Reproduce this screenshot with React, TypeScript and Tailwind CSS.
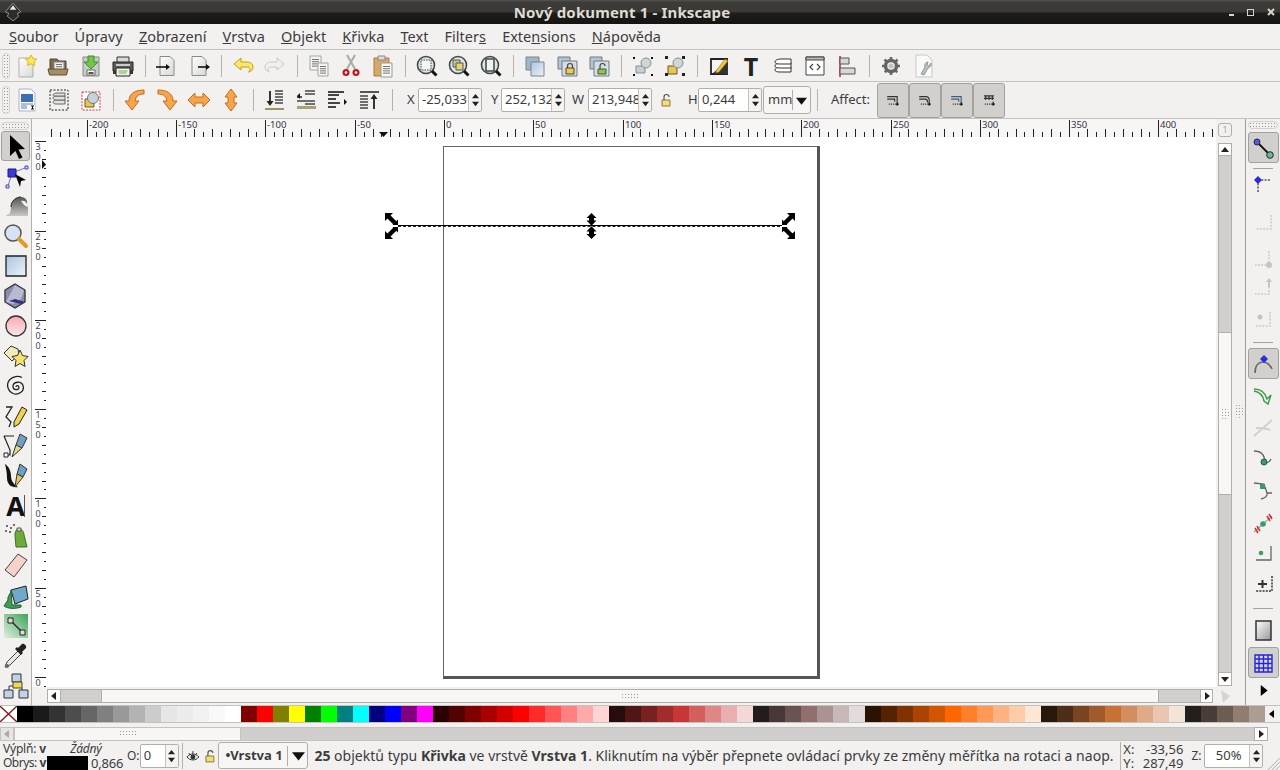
import React from "react";

const Pg = ({ fill = "url(#paper)" }: { fill?: string }) => (
  <path d="M5 2.5h10l4 4v15H5z" fill={fill} stroke="#8a8a85" strokeWidth="1" />
);
const Lines = ({ x, y, n = 3, w = 7 }: { x: number; y: number; n?: number; w?: number }) => (
  <g stroke="#77776f" strokeWidth="1">
    {Array.from({ length: n }).map((_, i) => (
      <path key={i} d={`M${x} ${y + i * 2.2 + 0.5}h${w}`} />
    ))}
  </g>
);
const Glass = ({ children }: { children?: React.ReactNode }) => (
  <>
    <circle cx="11" cy="11" r="8.5" fill="#dfe5e5" stroke="#3f4a4a" strokeWidth="1.6" />
    {children}
    <path d="M17 17l4.5 4.5" stroke="#111" strokeWidth="3" />
  </>
);
const Arrow = ({ d }: { d: string }) => <path d={d} fill="#f6a64a" stroke="#c8691a" strokeWidth="1" strokeLinejoin="round" />;
const Affect = ({ kind }: { kind: number }) => (
  <g fill="none" stroke={kind === 2 ? "#3f5f80" : "#333"} strokeWidth="1.4">
    {kind === 1 ? <path d="M5 8h8a4 4 0 0 1 4 4v2M5 11h7a3 3 0 0 1 3 3v1" /> : kind === 3 ? <path d="M6 7h12M6 10h12M8 7v5M12 7v5M16 7v5" /> : <path d="M5 8h12v6M5 11h9v3" />}
    <path d="M7 17h8" strokeDasharray="1.5 1" stroke="#444" />
    <path d="M17 14v5M15 17h4" stroke="#111" />
  </g>
);

const icons: Record<string, React.ReactNode> = {
  new: (<><path d="M4 4h14v19H4z" fill="url(#paper)" stroke="#b0b0a8" /><path d="M16 1l2 3.4 3.7.7-2.6 2.7.5 3.7-3.6-1.7-3.4 1.7.5-3.7L10.500 5l3.700-.7z" fill="#fce94f" stroke="#d8b62c" /></>),
  open: (<><path d="M3 5h7l2 2h7v13H3z" fill="#7d6a4d" stroke="#54452f" /><path d="M7 8h10v8H7z" fill="#eee" stroke="#888" /><Lines x={9} y={10} n={2} w={6} /><path d="M1 15h20l-1.500 6H2.500z" fill="#a58d64" stroke="#5f4f36" /></>),
  save: (<><path d="M4 3h16v19H4z" fill="#c7ccc8" stroke="#888c88" /><path d="M8 16h8v5H8z" fill="#fff" stroke="#666" /><path d="M9.500 18h5v2h-5z" fill="#555" /><path d="M9 2h6v6h4l-7 7-7-7h4z" fill="#73c34d" stroke="#3f8f28" /></>),
  print: (<><path d="M6 3h12v6H6z" fill="#d8d8d8" stroke="#333" /><path d="M2 8h20v9H2z" fill="#5b5d5b" stroke="#222" /><path d="M5 10h14v2H5z" fill="#ccc" /><path d="M5 14h14v8H5z" fill="#f1f1e6" stroke="#222" /><path d="M7 16h10l-2 4H8z" fill="#a9d69a" /><path d="M2 17h3v3H2zM19 17h3v3h-3z" fill="#333" /></>),
  import: (<><Pg /><path d="M1 13h12" stroke="#111" strokeWidth="1.600" /><path d="M11 10l4 3-4 3z" fill="#111" /></>),
  export: (<><Pg /><path d="M11 13h10" stroke="#111" strokeWidth="1.600" /><path d="M19 10l4 3-4 3z" fill="#111" /></>),
  undo: (<path d="M10 4L3 10l7 6v-3h6c2 0 3 1 3 2.500 0 1-.5 2-1.500 2.500 3-.5 4.500-2.500 4.500-5 0-3-2.500-5-6-5h-6z" fill="#fbe66e" stroke="#c4a000" strokeLinejoin="round" />),
  redo: (<path d="M14 4l7 6-7 6v-3H8c-2 0-3 1-3 2.500 0 1 .5 2 1.500 2.500-3-.5-4.500-2.500-4.500-5 0-3 2.500-5 6-5h6z" fill="#f0f0ee" stroke="#c9c9c6" strokeLinejoin="round" />),
  copy: (<><path d="M3 2h11v14H3z" fill="#f3f3f1" stroke="#a5a5a0" /><Lines x={5} y={5} n={4} w={7} /><path d="M11 9h10v13H11z" fill="#f3f3f1" stroke="#a5a5a0" /><Lines x={13} y={12} n={4} w={6} /></>),
  cut: (<><path d="M8 1l8 14M16 1L8 15" stroke="#a9a9a9" strokeWidth="2" /><circle cx="7" cy="18.500" r="3.500" fill="#c4161c" /><circle cx="17" cy="18.500" r="3.500" fill="#c4161c" /><circle cx="7" cy="18.500" r="1.300" fill="#fff" /><circle cx="17" cy="18.500" r="1.300" fill="#fff" /></>),
  paste: (<><path d="M3 4h15v18H3z" fill="#d9a869" stroke="#a97b3f" /><path d="M7 2h7v4H7z" fill="#dcdcdc" stroke="#888" /><path d="M10 9h11v14H10z" fill="#f7f7f5" stroke="#999" /><Lines x={12} y={12} n={4} w={7} /></>),
  zoomSel: (<Glass><path d="M6 6h10v10H6z" fill="#f6f6f6" stroke="#444" strokeDasharray="1.500 1" /></Glass>),
  zoomDraw: (<Glass><path d="M6 6h7v7H6z" fill="#c9c88a" stroke="#555" /><path d="M9 9h7v7H9z" fill="#e8d470" stroke="#555" /></Glass>),
  zoomPage: (<Glass><path d="M7 5h8v12H7z" fill="#f2f2f2" stroke="#444" strokeWidth="1.500" /></Glass>),
  dup: (<><path d="M3 3h13v13H3z" fill="#9fb6c9" stroke="#7a858f" /><path d="M8 8h13v14H8z" fill="url(#blue)" stroke="#7a858f" /></>),
  clone: (<><path d="M3 3h12v12H3z" fill="#b3c4d3" stroke="#6f7a84" /><path d="M7 7h15v15H7z" fill="#d6dee5" stroke="#6f7a84" /><path d="M11 14h8v6h-8z" fill="#e8c95b" stroke="#5a4a10" /><path d="M12.500 14v-2a2.500 2.500 0 0 1 5 0v2" fill="none" stroke="#444" strokeWidth="1.200" /></>),
  unlink: (<><path d="M3 3h12v12H3z" fill="#b3c4d3" stroke="#6f7a84" /><path d="M7 7h15v15H7z" fill="#d6dee5" stroke="#6f7a84" /><path d="M11 15h8v5h-8z" fill="#8fc25f" stroke="#3c5f20" /><path d="M13 15v-3a2.500 2.500 0 0 1 5 0" fill="none" stroke="#444" strokeWidth="1.200" /></>),
  group: (<><path d="M5 12h9v7H5z" fill="#c6ced6" stroke="#8a8f94" /><circle cx="15" cy="9" r="5" fill="#cfd6d6" stroke="#8a8f94" /><path d="M2 3h2v2H2zM20 3h2v2h-2zM2 20h2v2H2zM20 20h2v2h-2z" fill="#111" /></>),
  ungroup: (<><path d="M5 12h9v8H5z" fill="#e9c654" stroke="#6b5a17" /><circle cx="15" cy="9" r="5" fill="#cfd6d6" stroke="#8a8f94" /><path d="M2 2h3v3H2zM19 2h3v3h-3zM2 19h3v3H2zM19 19h3v3h-3z" fill="#222" /></>),
  fill: (<><path d="M4 5h16v15H4z" fill="#f4f4f4" stroke="#222" strokeWidth="1.800" /><path d="M5 20L20 7v13z" fill="#333" /><path d="M9 17l9-12 3 2-9 11-3 1z" fill="#f0c93a" stroke="#8a6c10" strokeWidth=".6" /></>),
  layers: (<g fill="#fff" stroke="#333"><path d="M4 16c0-2 3-3 6-3h10v5H9c-3 0-5-.5-5-2z" /><path d="M4 12c0-2 3-3 6-3h10v5H9c-3 0-5-.5-5-2z" /><path d="M4 8c0-2 3-3 6-3h10v5H9c-3 0-5-.5-5-2z" /></g>),
  xml: (<><path d="M3 3h18v18H3z" fill="#fff" stroke="#444" /><path d="M3 3h18v3H3z" fill="#b9b9b9" stroke="#444" /><path d="M10 10l-3 3 3 3M14 10l3 3-3 3" fill="none" stroke="#444" strokeWidth="1.200" /></>),
  align: (<><path d="M5 2v21" stroke="#b0263b" strokeWidth="1.500" /><path d="M5 4h9v6H5zM5 14h15v6H5z" fill="#d7d7d4" stroke="#555" /></>),
  prefs: (<><circle cx="12" cy="12" r="5.500" fill="none" stroke="#666" strokeWidth="3.500" /><path d="M12 3v18M3 12h18M5.500 5.500l13 13M18.500 5.500l-13 13" stroke="#666" strokeWidth="2.600" strokeDasharray="3 12" /><circle cx="12" cy="12" r="2.600" fill="#c4c4be" /></>),
  docProps: (<><path d="M5 1h11l5 5v17H5z" fill="#fafafa" stroke="#c8c8c4" /><path d="M10 20l4-7c-1-3 1-5 3-5l-1 3 2 1 2-3c1 2-1 5-3 5l-4 7z" fill="#b8c2c2" stroke="#7d8a8a" strokeWidth=".8" /></>),
  doc: (<><path d="M4 1h12l4 4v18H4z" fill="#fafafa" stroke="#a8b4c6" /><path d="M6 6h12v8H6z" fill="#3d6fb5" /><path d="M6 16h12M6 18h6M6 20h6" stroke="#5d83bb" /><path d="M15 17h5v5h-5z" fill="#fff" /><path d="M16 18h3M17.500 18v3M16 21h3" stroke="#111" /></>),
  layersSel: (<><path d="M3 2h18v20H3z" fill="none" stroke="#222" strokeDasharray="2 1.500" /><g fill="#e1e1de" stroke="#666"><path d="M6 14c0-1 2-2 4-2h8v4H9c-2 0-3-1-3-2z" /><path d="M6 10c0-1 2-2 4-2h8v4H9c-2 0-3-1-3-2z" /><path d="M6 7c0-1 2-2 4-2h8v3H9c-2 0-3 0-3-1z" /></g></>),
  selZoom: (<><path d="M3 4h18v18H3z" fill="#fff" stroke="#d8343b" strokeDasharray="2 1.200" /><path d="M6 11h9v8H6z" fill="#e9c654" stroke="#6b5a17" /><circle cx="14" cy="10" r="5.500" fill="#c6d2de" stroke="#777" /></>),
  rotL: (<Arrow d="M21 2v4c-4 0-8 1-9 7h4l-7 9-7-9h4C6 5 13 2 21 2z" />),
  rotR: (<Arrow d="M3 2v4c4 0 8 1 9 7H8l7 9 7-9h-4C18 5 11 2 3 2z" />),
  flipH: (<Arrow d="M1 12l7-7v4h8V5l7 7-7 7v-4H8v4z" />),
  flipV: (<Arrow d="M12 1l6 8h-3v6h3l-6 8-6-8h3V9H6z" />),
  lower: (<><path d="M8 3v13" stroke="#222" strokeWidth="1.800" /><path d="M4.500 13L8 18l3.500-5z" fill="#222" /><path d="M13 3h8M13 6h8M13 9h8M13 12h8M13 15h8" stroke="#444" strokeWidth="1.500" /><path d="M3 20h19v2H3z" fill="#9b9466" /></>),
  lower1: (<><path d="M3 9h6" stroke="#222" strokeWidth="1.500" strokeDasharray="2 1" /><path d="M6 5L3 8l3 3z" fill="#111" /><path d="M11 3h10M11 6h10M3 13h18M11 16h10" stroke="#444" strokeWidth="1.500" /><path d="M3 18h19v3H3z" fill="#a8a17a" /></>),
  raise1: (<><path d="M2 4h16M2 7h11M2 11h8M2 15h12M2 19h8" stroke="#444" strokeWidth="1.800" /><path d="M18 11l3 3-3 3z" fill="#111" /></>),
  raise: (<><path d="M2 3h19v2H2z" fill="#555" /><path d="M2 8h8M2 11h8M2 14h8M2 17h8M2 20h8" stroke="#444" strokeWidth="1.500" /><path d="M16 21V9" stroke="#222" strokeWidth="1.800" /><path d="M12.500 11L16 6l3.500 5z" fill="#222" /></>),
};

const tools: Record<string, React.ReactNode> = {
  select: (<path d="M7 2l15 14-6.500.5 4 8-3.500 1.500-3.500-8L7 23z" fill="#000" />),
  node: (<><path d="M9 10L22 5M9 10L5 23" stroke="#7373b8" /><path d="M5 6h8v8H5z" fill="#3a3ad8" stroke="#1d1d86" /><path d="M22 3h3v3h-3zM3 22h3v3H3z" fill="#cfcff5" stroke="#4a4ac0" /><path d="M12 11l11 6-5 1-1 6z" fill="#000" /></>),
  tweak: (<><path d="M3 22c2 0 5-1 5-8 0-6 5-10 10-10 4 0 7 3 6 7-1-3-4-4-6-3 2 2 3 5 7 6v9H3z" fill="url(#grey)" /><path d="M8 14c0-6 5-10 10-10" fill="none" stroke="#222" strokeWidth="1" /></>),
  zoom: (<><circle cx="10" cy="10" r="8" fill="#d5e4f2" stroke="#555" strokeWidth="1.500" /><path d="M16 16l7 7" stroke="#e19a29" strokeWidth="4" strokeLinecap="round" /></>),
  rect: (<path d="M3 3h20v20H3z" fill="url(#blue)" stroke="#222" strokeWidth="1.300" />),
  box: (<><path d="M12 1l10 6v12l-10 6-10-6V7z" fill="#8b8bb0" stroke="#333" strokeWidth="1.300" /><path d="M12 2l9 5.500-3 8.500-8 5-7-2z" fill="#b9b9d2" /><path d="M6 18l12 3 4-2-10-3z" fill="#32327a" /></>),
  ellipse: (<circle cx="13" cy="13" r="10" fill="url(#pink)" stroke="#333" strokeWidth="1.300" />),
  star: (<><path d="M1 10l7-7 7 3 1 6-7 6z" fill="#f2eab9" stroke="#333" /><path d="M17 7l2.500 5.500 5.500 1-4 4 1 6-5-3-5 3 1-6-4-4 5.500-1z" fill="#f2e36b" stroke="#333" /></>),
  spiral: (<path d="M13 14c0-2 3-2 3 .5 0 3-6 3-6-1 0-5 8-6 10-1 2 6-5 10-10 8-6-3-7-10-3-14 3-3 8-4 12-2" fill="none" stroke="#222" strokeWidth="1.300" />),
  pencil: (<><path d="M3 4h6L3 14l5 5-2 5" fill="none" stroke="#222" strokeWidth="1.300" /><path d="M11 19l8-15 5 3-8 14-5 3z" fill="#f2d14b" stroke="#222" /></>),
  pen: (<><path d="M1 3h10M1 3l6 14 0 5H3" fill="none" stroke="#222" strokeWidth="1.200" /><path d="M1 20h4v4H1z" fill="#fff" stroke="#222" /><path d="M17 1l7 4-5 10-6 4 0-7z" fill="#6f9fc4" stroke="#333" /><path d="M9 24l4-12 6 3z" fill="#e9d88a" stroke="#333" /></>),
  calli: (<><path d="M2 1c3 2 6 6 6 12s4 9 7 11c-6 1-11-2-11-9 0-5-1-10-2-14z" fill="#111" /><path d="M17 1l7 5-4 8-6-3z" fill="#6f9fc4" stroke="#333" /><path d="M12 24l2-13 6 3z" fill="#e9c654" stroke="#333" /></>),
  text: null,
  spray: (<><path d="M3 3h2M7 5h2M2 8h2M6 9h2M10 2h2" stroke="#444" strokeWidth="1.600" /><path d="M12 12c0-3 1-6 4-6s5 3 5 6l3 12H13z" fill="#6eab3c" stroke="#3f6d1f" /><path d="M14 5h4v3h-4z" fill="#ddd" stroke="#555" /></>),
  eraser: (<path d="M15 1l9 6-13 17-9-7z" fill="#f6d2c8" stroke="#444" />),
  bucket: (<><path d="M8 7l15-4 2 13-13 5z" fill="#6fa8c8" stroke="#222" /><path d="M8 7c0 4-4 6-3 10l-4 6c4 3 12 3 17 1v-2H9z" fill="#3f9b58" stroke="#1f5f32" /></>),
  gradient: (<><path d="M1 1h24v24H1z" fill="url(#green)" /><path d="M8 8l11 11" stroke="#222" strokeWidth="1.300" /><path d="M5 5h5v5H5zM17 17h5v5h-5z" fill="#ddd" stroke="#222" /></>),
  dropper: (<><path d="M2 24l2-5L16 7l3 3L7 22z" fill="#e8e8e8" stroke="#444" /><path d="M15 5l4-4c2-1 5 2 4 4l-4 4 1 1-2 2-6-6 2-2z" fill="#222" /><circle cx="4" cy="23" r="2" fill="#666" /></>),
  connector: (<><path d="M9 1h9v8H9z" fill="#bcd3e8" stroke="#333" /><path d="M1 17h9v8H1zM16 17h9v8h-9z" fill="#bcd3e8" stroke="#333" /><path d="M10 9h9v6h-9z" fill="#f2d94b" stroke="#444" /><path d="M6 17v-4h4M19 15v2" fill="none" stroke="#333" /></>),
};

const snap: Record<string, React.ReactNode> = {
  on: (<><path d="M6 6l12 12" stroke="#111" strokeWidth="1.800" /><circle cx="6" cy="6" r="3" fill="#5a5ae0" stroke="#224" /><circle cx="19" cy="19" r="3.300" fill="#6fb88e" stroke="#224" /></>),
  bbox: (<><path d="M7 7h12M7 7v13" stroke="#555" strokeWidth="1.500" strokeDasharray="2 1.300" /><path d="M3 7l4-4 4 4-4 4z" fill="#2a2ae0" /></>),
  b2: (<path d="M20 4v14H5" fill="none" stroke="#c9c9c9" strokeWidth="1.500" strokeDasharray="2 1.300" />),
  b3: (<><path d="M18 3v14H4" fill="none" stroke="#c9c9c9" strokeWidth="1.500" strokeDasharray="2 1.300" /><circle cx="18" cy="17" r="3" fill="#c4c4c4" /></>),
  b4: (<><path d="M18 5v14H4" fill="none" stroke="#c9c9c9" strokeWidth="1.500" strokeDasharray="2 1.300" /><path d="M18 3l3 4h-2v5h-2V7h-2z" fill="#c4c4c4" /></>),
  b5: (<><path d="M19 4v14H5" fill="none" stroke="#c9c9c9" strokeWidth="1.500" strokeDasharray="2 1.300" /><circle cx="9" cy="9" r="2.500" fill="#c4c4c4" /></>),
  path: (<><path d="M4 21c0-8 4-11 8-11s7 3 9 7" fill="none" stroke="#666" strokeWidth="1.600" /><path d="M9 7l4-4 4 4-4 4z" fill="#2a2ae0" /></>),
  p2: (<path d="M3 6c6 0 11 3 13 10l4-4-3 9-4-3c-1-5-4-9-10-10" fill="none" stroke="#3a9a47" strokeWidth="1.400" />),
  p3: (<path d="M3 21L21 5M5 13c5 0 10 0 14 2" fill="none" stroke="#cfcfcf" strokeWidth="1.800" />),
  p4: (<><path d="M3 4c7 0 11 4 11 12 3 0 5-2 6-4" fill="none" stroke="#666" strokeWidth="1.300" /><circle cx="13" cy="15" r="3" fill="#3a9a6a" stroke="#1e5e3a" /></>),
  p5: (<><path d="M3 5l10 1 3 9c1 3-2 5-6 6M16 15l5 0" fill="none" stroke="#666" strokeWidth="1.300" /><path d="M9 6h5v5H9z" fill="#3a9a6a" /></>),
  p6: (<><path d="M3 21L21 5" stroke="#3a9a6a" /><path d="M4 17l3 5M6 15l3 5M16 5l3 5M18 3l3 5" stroke="#d8343b" strokeWidth="1.600" /><circle cx="12" cy="13" r="2.800" fill="#3a9a6a" /></>),
  p7: (<><path d="M20 5v14H5" fill="none" stroke="#666" strokeWidth="1.300" /><circle cx="10" cy="12" r="2.300" fill="#3aa05a" /></>),
  p8: (<><path d="M21 4v15H4" fill="none" stroke="#333" strokeWidth="1.500" strokeDasharray="2 1.200" /><path d="M7 12h9M11.500 8v8" stroke="#333" strokeWidth="2" /></>),
  page: (<path d="M5 3h15v19H5z" fill="url(#page)" stroke="#333" strokeWidth="1.500" />),
  grid: (<path d="M4 4h17v17H4zM4 8h17M4 12.500h17M4 17h17M8 4v17M12.500 4v17M17 4v17" fill="#d8d8ff" stroke="#2424d8" strokeWidth="1.400" />),
};

const Ico = ({ children, size = 24 }: { children: React.ReactNode; size?: number }) => (
  <svg width={size} height={size} viewBox="0 0 24 24">{children}</svg>
);
const ToolIco = ({ children }: { children: React.ReactNode }) => (
  <svg width="26" height="26" viewBox="0 0 26 26">{children}</svg>
);

const Slot = ({ name }: { name: string }) => (
  <div className="w-8 h-8 flex items-center justify-center">
    {name === "text" ? (
      <span className="font-['Liberation_Serif',serif] font-bold text-[25px] leading-[24px] text-[#222]">T</span>
    ) : (
      <Ico>{icons[name]}</Ico>
    )}
  </div>
);
const Sep = () => (
  <div className="w-3 flex justify-center">
    <div className="w-px h-[22px] bg-[#b5b3ae]"></div>
  </div>
);
const Grip = ({ className }: { className: string }) => (
  <div className={`rounded-sm border border-[#d5d3cf] bg-[radial-gradient(#9c9a96_0.7px,transparent_0.9px)] bg-[length:3px_3px] ${className}`}></div>
);
const Tri = ({ dir, className = "" }: { dir: "u" | "d" | "l" | "r"; className?: string }) => {
  const d = { u: "M0 6L4 1l4 5z", d: "M0 2h8L4 7z", l: "M6 0v8L1 4z", r: "M2 0v8l5-4z" }[dir];
  return (
    <svg width="8" height="8" viewBox="0 0 8 8" className={className}>
      <path d={d} fill="currentColor" />
    </svg>
  );
};
const Spin = ({ value, box, height = "h-[24px]" }: { value: string; box: string; height?: string }) => (
  <div className={`flex ${height} border border-[#b3afa8] rounded-[2px] bg-white`}>
    <div className={`${box} flex items-center pl-[3px] text-[13px] text-[#3c3c3c] whitespace-nowrap`}>{value}</div>
    <div className="w-[13px] border-l border-[#c6c3bd] bg-[#f5f4f3] flex flex-col items-center justify-center text-[#222]">
      <Tri dir="u" className="w-[7px] h-[7px]" />
      <Tri dir="d" className="w-[7px] h-[7px]" />
    </div>
  </div>
);
const OnBtn = ({ children }: { children: React.ReactNode }) => (
  <div className="h-[31px] w-[31px] rounded-[3px] border border-[#a3a19c] bg-[#d2d0cd] flex items-center justify-center">{children}</div>
);

const greys = ["000000", "1a1a1a", "333333", "4d4d4d", "666666", "808080", "999999", "b3b3b3", "cccccc", "e6e6e6", "ececec", "f2f2f2", "f9f9f9", "ffffff"];
const palette = [
  ...greys,
  "800000", "ff0000", "808000", "ffff00", "008000", "00ff00", "008080", "00ffff", "000080", "0000ff", "800080", "ff00ff",
  "2b0000", "550000", "800000", "aa0000", "d40000", "ff0000", "ff2a2a", "ff5555", "ff8080", "ffaaaa", "ffd5d5",
  "280b0b", "501616", "782121", "a02c2c", "c83737", "d35f5f", "de8787", "e9afaf", "f4d7d7",
  "241c1c", "483737", "6c5353", "916f6f", "ac9393", "c8b7b7", "e3dbdb",
  "2b1100", "552200", "803300", "aa4400", "d45500", "ff6600", "ff7f2a", "ff9955", "ffb380", "ffccaa", "ffe6d5",
  "28170b", "502d16", "784421", "a05a2c", "c87137", "d38d5f", "deaa87", "e9c6af", "f4e3d7",
  "241f1c", "483e37", "6c5d53", "917c6f", "ac9d93",
];

const TopRuler = () => {
  const ticks: React.ReactNode[] = [];
  for (let v = -225; v <= 430; v += 5) {
    const x = 412 + v * 1.786;
    if (x < 14 || x > 1182) continue;
    const major = v % 50 === 0;
    const mid = v % 10 === 0;
    ticks.push(<rect key={v} x={Math.round(x)} y={major ? 1 : mid ? 10 : 13} width="1" height={major ? 17 : mid ? 8 : 5} fill="#222" />);
    if (major) {
      ticks.push(
        <text key={`l${v}`} x={Math.round(x) + 2} y="9" fontSize="9.500" fill="#334" fontFamily="'Noto Sans',sans-serif">
          {v}
        </text>
      );
    }
  }
  return (
    <svg width="1184" height="18" viewBox="0 0 1184 18" className="bg-[#f7f6f5]">
      {ticks}
      <path d="M347 13h9l-4.500 5z" fill="#111" />
    </svg>
  );
};

const LeftRuler = () => {
  const ticks: React.ReactNode[] = [];
  for (let v = -5; v <= 310; v += 5) {
    const y = 540 - v * 1.786;
    if (y < 0) continue;
    const major = v % 50 === 0;
    const mid = v % 10 === 0;
    const x = major ? 3 : mid ? 10 : 12;
    ticks.push(<rect key={v} x={x} y={Math.round(y)} width={14 - x} height="1" fill="#222" />);
    if (major) {
      // digits run top to bottom as one upright vertical label
      ticks.push(
        <text
          key={`l${v}`}
          x="6"
          y={Math.round(y) - 1}
          fontSize="9"
          letterSpacing="-3"
          fill="#445"
          fontFamily="'Noto Sans',sans-serif"
          className="[writing-mode:vertical-rl] [text-orientation:upright]"
        >
          {v}
        </text>
      );
    }
  }
  return (
    <svg width="14" height="550" viewBox="0 0 14 550" className="bg-white">
      {ticks}
      <path d="M10 23v9l4-4.500z" fill="#111" />
    </svg>
  );
};

const CornerHandle = ({ flip }: { flip?: boolean }) => (
  <svg width="14" height="26" viewBox="0 0 14 26" className={flip ? "-scale-x-100" : ""}>
    <path d="M3 3l8 8M3 23l8-8" stroke="#000" strokeWidth="4.500" />
    <path d="M0 0h8L0 8zM13 13.500H6l7-7zM0 26h8l-8-8zM13 12.500H6l7 7z" fill="#000" />
    <path d="M1 13l4-2.500V12h8v2H5v1.500z" fill="#fff" />
  </svg>
);
const MidHandle = () => (
  <svg width="11" height="26" viewBox="0 0 11 26">
    <path d="M5.500 0L10.500 5H8v2.500h2.500L5.500 12.800.5 7.500H3V5H.5z" fill="#000" />
    <path d="M5.500 13.200L10.500 18.500H8V21h2.500L5.500 26 .5 21H3v-2.500H.5z" fill="#000" />
  </svg>
);

const menus = [
  <><u>S</u>oubor</>, <>Úpravy</>, <><u>Z</u>obrazení</>, <><u>V</u>rstva</>, <><u>O</u>bjekt</>, <><u>K</u>řivka</>,
  <><u>T</u>ext</>, <>Filter<u>s</u></>, <>Exte<u>n</u>sions</>, <><u>N</u>ápověda</>,
];

export default function App() {
  return (
    <div className="w-[1280px] h-[770px] overflow-hidden flex flex-col bg-[#f2f1f0] text-[#3c3c3c] font-['Open_Sans','Noto_Sans',sans-serif]">
      <svg className="absolute w-0 h-0">
        <defs>
          <linearGradient id="paper" x1="0" y1="0" x2="1" y2="1"><stop offset="0" stopColor="#ffffff" /><stop offset="1" stopColor="#d8d8d4" /></linearGradient>
          <linearGradient id="blue" x1="0" y1="0" x2="1" y2="1"><stop offset="0" stopColor="#a9c4dc" /><stop offset="1" stopColor="#eef3f8" /></linearGradient>
          <linearGradient id="pink" x1="0" y1="0" x2="0" y2="1"><stop offset="0" stopColor="#f9a9b0" /><stop offset="1" stopColor="#fde6e8" /></linearGradient>
          <linearGradient id="grey" x1="0" y1="0" x2="0" y2="1"><stop offset="0" stopColor="#555" /><stop offset="1" stopColor="#c8c8c8" /></linearGradient>
          <linearGradient id="green" x1="0" y1="1" x2="1" y2="0"><stop offset="0" stopColor="#e0f0de" /><stop offset="1" stopColor="#3fa35a" /></linearGradient>
          <linearGradient id="page" x1="0" y1="0" x2="1" y2="1"><stop offset="0" stopColor="#fff" /><stop offset="1" stopColor="#999" /></linearGradient>
        </defs>
      </svg>

      {/* Title bar */}
      <div className="h-[24px] shrink-0 flex items-center relative bg-[linear-gradient(#55544f_0px,#3d3c38_2px,#3a3935_12px,#1e1d1b_13px,#141412_24px)]">
        <svg width="20" height="20" viewBox="0 0 18 18" className="ml-[3px]">
          <path d="M9 1l7 8-3 1 1 3-5 4-5-4 1-3-3-1z" fill="#2c2c2c" stroke="#9a9a9a" strokeWidth=".8" />
          <path d="M9 3l3 4H6z" fill="#e8e8e8" />
        </svg>
        <div className="absolute left-0 right-[36px] text-center text-[15px] font-bold tracking-[0.15px] text-[#dfdbd2]">Nový dokument 1 - Inkscape</div>
        <div className="ml-auto flex items-center gap-[13px] pr-[5px] text-[#d8d4cc]">
          <div className="w-[5px] h-[2px] bg-[#d8d4cc] mt-[5px]"></div>
          <div className="w-[7px] h-[7px] border border-[#d8d4cc]"></div>
          <svg width="8" height="8" viewBox="0 0 8 8"><path d="M1 1l6 6M7 1L1 7" stroke="#d8d4cc" strokeWidth="2" /></svg>
        </div>
      </div>

      {/* Menu */}
      <div className="h-[25px] shrink-0 flex items-center gap-[16.2px] pl-[9px] text-[14.500px] text-[#3c3c3c]">
        {menus.map((m, i) => (
          <span key={i}>{m}</span>
        ))}
      </div>

      {/* Commands bar */}
      <div className="h-[33px] shrink-0 flex items-center border-y border-[#c4c2bd]">
        <Grip className="w-[8px] h-[26px] ml-[2px] mr-[1px]" />
        {["new", "open", "save", "print"].map((n) => <Slot key={n} name={n} />)}
        <Sep />
        {["import", "export"].map((n) => <Slot key={n} name={n} />)}
        <Sep />
        {["undo", "redo"].map((n) => <Slot key={n} name={n} />)}
        <Sep />
        {["copy", "cut", "paste"].map((n) => <Slot key={n} name={n} />)}
        <Sep />
        {["zoomSel", "zoomDraw", "zoomPage"].map((n) => <Slot key={n} name={n} />)}
        <Sep />
        {["dup", "clone", "unlink"].map((n) => <Slot key={n} name={n} />)}
        <Sep />
        {["group", "ungroup"].map((n) => <Slot key={n} name={n} />)}
        <Sep />
        {["fill", "text", "layers", "xml", "align"].map((n) => <Slot key={n} name={n} />)}
        <Sep />
        {["prefs", "docProps"].map((n) => <Slot key={n} name={n} />)}
      </div>

      {/* Selector controls */}
      <div className="h-[37px] shrink-0 flex items-center border-b border-[#c4c2bd]">
        <Grip className="w-[8px] h-[28px] ml-[2px] mr-[1px]" />
        {["doc", "layersSel", "selZoom"].map((n) => <Slot key={n} name={n} />)}
        <Sep />
        {["rotL", "rotR", "flipH", "flipV"].map((n) => <Slot key={n} name={n} />)}
        <Sep />
        <div className="-ml-[1px] flex">{["lower", "lower1", "raise1", "raise"].map((n) => <Slot key={n} name={n} />)}</div>
        <Sep />
        <span className="ml-[9px] w-[11px] text-[13px]">X</span>
        <Spin value="-25,033" box="w-[49px]" />
        <span className="ml-[9px] w-[10px] text-[13px]">Y</span>
        <Spin value="252,132" box="w-[49px]" />
        <span className="ml-[7px] w-[16px] text-[13px]">W</span>
        <Spin value="213,948" box="w-[49px]" />
        <svg width="12" height="14" viewBox="0 0 12 14" className="ml-[8px]">
          <path d="M2 7h8v6H2z" fill="#f3dc7e" stroke="#8a7a30" />
          <path d="M4 7V4a2.500 2.500 0 0 1 5 0" fill="none" stroke="#555" strokeWidth="1.200" />
        </svg>
        <span className="ml-[16px] w-[10px] text-[13px]">H</span>
        <Spin value="0,244" box="w-[49px]" />
        <div className="ml-[1px] w-[48px] h-[28px] rounded-[3px] border border-[#b3afa8] bg-[#f7f6f5] flex items-center text-[13px]">
          <span className="pl-[4px] w-[28px]">mm</span>
          <div className="w-px h-[20px] bg-[#b3afa8]"></div>
          <Tri dir="d" className="ml-[3px] w-[11px] h-[11px] text-[#111]" />
        </div>
        <div className="ml-[6px] w-px h-[22px] bg-[#b5b3ae]"></div>
        <span className="ml-[13px] text-[13px] w-[46px]">Affect:</span>
        <div className="flex">
          {[0, 1, 2, 3].map((k) => (
            <div key={k} className="w-8 h-[35px] rounded-[3px] border border-[#a3a19c] bg-[#d2d0cd] flex items-center justify-center">
              <Ico size={20}><Affect kind={k} /></Ico>
            </div>
          ))}
        </div>
      </div>

      {/* Main area */}
      <div className="h-[586px] shrink-0 flex">
        <div className="w-[32px] shrink-0 border-r border-[#b5b3ae]">
          <Grip className="w-[28px] h-[8px] ml-[1px] mt-[3px] mb-[1px]" />
          <div className="pl-[1px] flex flex-col">
            {Object.keys(tools).map((t, i) => (
              <div key={t} className={`w-[29px] h-[30px] flex items-center justify-center ${i === 0 ? "rounded-[3px] border border-[#a3a19c] bg-[#d2d0cd]" : ""}`}>
                {t === "text" ? (
                  <span className="flex items-center">
                    <span className="font-['Liberation_Sans',sans-serif] font-bold text-[27px] leading-[28px] text-[#111]">A</span>
                    <span className="w-px h-[22px] bg-[#555] -ml-[1px]"></span>
                  </span>
                ) : (
                  <ToolIco>{tools[t]}</ToolIco>
                )}
              </div>
            ))}
          </div>
        </div>

        <div className="flex-1 min-w-0 flex flex-col">
          <div className="h-[18px] flex">
            <TopRuler />
            <div className="ml-[2px] w-[14px] h-[14px] mt-[4px] rounded-[3px] border border-[#b3afa8] text-[9px] leading-[12px] text-center text-[#aaa]">1</div>
          </div>
          <div className="h-[550px] flex">
            <LeftRuler />
            <div className="relative w-[1170px] bg-white overflow-hidden">
              <div className="absolute left-[397px] top-[9px] w-[377px] h-[533px] bg-white border border-[#666] border-r-[3px] border-b-[3px] border-r-[#555] border-b-[#555]"></div>
              <div className="absolute left-[352px] top-[88px] w-[387px] h-px bg-black"></div>
              <div className="absolute left-[352px] top-[89px] w-[387px] border-t border-dashed border-[#222]"></div>
              <div className="absolute left-[339px] top-[76px]"><CornerHandle /></div>
              <div className="absolute left-[540px] top-[76px]"><MidHandle /></div>
              <div className="absolute left-[735px] top-[76px]"><CornerHandle flip /></div>
            </div>
            <div className="w-[2px] bg-[#f2f1f0]"></div>
            <div className="w-[14px] pt-[6px] flex flex-col">
              <div className="h-[13px] border border-[#b3afa8] bg-white flex items-center justify-center text-[#222]"><Tri dir="u" /></div>
              <div className="h-[176px] bg-[#d0cfcd] border-x border-[#b3afa8]"></div>
              <div className="h-[163px] bg-[#f8f7f6] border border-[#b3afa8] flex items-center justify-center">
                <Grip className="w-[8px] h-[12px] border-0" />
              </div>
              <div className="h-[177px] bg-[#d0cfcd] border-x border-[#b3afa8]"></div>
              <div className="h-[14px] border border-[#b3afa8] bg-white flex items-center justify-center text-[#222]"><Tri dir="d" /></div>
            </div>
            <div className="w-[13px] flex items-center justify-center">
              <Grip className="w-[8px] h-[14px] border-0 mt-[-3px]" />
            </div>
          </div>
          <div className="h-[18px] flex items-center pl-[15px]">
            <div className="w-[14px] h-[14px] border border-[#b3afa8] bg-white flex items-center justify-center text-[#222]"><Tri dir="l" /></div>
            <div className="w-[40px] h-[14px] bg-[#d0cfcd] border-y border-[#b3afa8]"></div>
            <div className="w-[1058px] h-[14px] bg-[#f8f7f6] border border-[#b3afa8] flex items-center justify-center">
              <Grip className="w-[18px] h-[7px] border-0" />
            </div>
            <div className="w-[41px] h-[14px] bg-[#d0cfcd] border-y border-[#b3afa8]"></div>
            <div className="w-[13px] h-[14px] border border-[#b3afa8] bg-white flex items-center justify-center text-[#222]"><Tri dir="r" /></div>
            <svg width="16" height="16" viewBox="0 0 16 16" className="ml-[4px]"><path d="M4 2l9 6-7 7z" fill="#d4d4d2" /></svg>
          </div>
        </div>

        <div className="w-[35px] shrink-0 border-l border-[#9f9d98] flex flex-col items-center">
          <Grip className="w-[30px] h-[8px] mt-[2px] mb-[3px]" />
          <OnBtn><Ico>{snap.on}</Ico></OnBtn>
          <div className="h-[10px] flex items-center"><div className="w-[20px] h-px bg-[#a5a39e]"></div></div>
          <div className="h-[24px] flex items-center"><Ico>{snap.bbox}</Ico></div>
          <div className="h-[52px] flex items-center"><Ico>{snap.b2}</Ico></div>
          <div className="h-[22px] flex items-center"><Ico>{snap.b3}</Ico></div>
          <div className="h-[32px] flex items-center"><Ico>{snap.b4}</Ico></div>
          <div className="h-[34px] flex items-center"><Ico>{snap.b5}</Ico></div>
          <div className="h-[11px] flex items-center"><div className="w-[20px] h-px bg-[#a5a39e]"></div></div>
          <OnBtn><Ico>{snap.path}</Ico></OnBtn>
          <div className="h-[32px] flex items-center"><Ico>{snap.p2}</Ico></div>
          <div className="h-[32px] flex items-center"><Ico>{snap.p3}</Ico></div>
          <div className="h-[32px] flex items-center"><Ico>{snap.p4}</Ico></div>
          <div className="h-[30px] flex items-center"><Ico>{snap.p5}</Ico></div>
          <div className="h-[36px] flex items-center"><Ico>{snap.p6}</Ico></div>
          <div className="h-[24px] flex items-center"><Ico>{snap.p7}</Ico></div>
          <div className="h-[38px] flex items-center"><Ico>{snap.p8}</Ico></div>
          <div className="h-[10px] flex items-center"><div className="w-[20px] h-px bg-[#a5a39e]"></div></div>
          <div className="h-[34px] flex items-center"><Ico>{snap.page}</Ico></div>
          <OnBtn><Ico>{snap.grid}</Ico></OnBtn>
          <div className="h-[24px] flex items-center text-black"><Tri dir="r" className="w-[11px] h-[11px]" /></div>
        </div>
      </div>

      {/* Palette */}
      <div className="h-[18px] shrink-0 flex items-center border-y border-[#c4c2bd]">
        <svg width="17" height="16" viewBox="0 0 17 16" className="bg-white">
          <path d="M0 0l17 16M17 0L0 16" stroke="#7a1c1c" strokeWidth="1.300" />
        </svg>
        <div className="flex">
          {palette.map((c, i) => (
            <div key={i} className="w-4 h-4" style={{ backgroundColor: `#${c}` }}></div>
          ))}
        </div>
        <Tri dir="l" className="ml-[3px] text-black" />
      </div>

      {/* Palette scrollbar */}
      <div className="h-[18px] shrink-0 flex items-center pt-[3px]">
        <div className="w-[14px] h-[14px] border border-[#c6c3bd] bg-[#e6e5e3] flex items-center justify-center text-[#aaa]"><Tri dir="l" /></div>
        <div className="w-[227px] h-[14px] bg-[#f8f7f6] border border-[#c6c3bd] flex items-center justify-center">
          <Grip className="w-[18px] h-[7px] border-0" />
        </div>
        <div className="w-[1013px] h-[14px] bg-[#d0cfcd] border-y border-[#c6c3bd]"></div>
        <div className="w-[14px] h-[14px] border border-[#b3afa8] bg-white flex items-center justify-center text-[#222]"><Tri dir="r" /></div>
      </div>

      {/* Status bar */}
      <div className="flex-1 min-h-0 flex items-center text-[13px]">
        <div className="w-[124px] pl-[3px] shrink-0 text-[12px] leading-[14px] tracking-[-0.2px] whitespace-nowrap">
          <div className="flex"><span className="w-[67px]">Výplň: <b>v</b></span><i>Žádný</i></div>
          <div className="flex items-center"><span className="w-[44px] tracking-[-0.5px]">Obrys: <b>v</b></span><span className="w-[41px] h-[14px] bg-black"></span><span className="ml-[3px] text-[13px]">0,866</span></div>
        </div>
        <span className="text-[12px] w-[13px] ml-[3px]">O:</span>
        <Spin value="0" box="w-[24px]" />
        <div className="ml-[3px] w-px h-[26px] bg-[#b5b3ae]"></div>
        <svg width="14" height="12" viewBox="0 0 14 12" className="ml-[3px]">
          <path d="M1 7c3-4 9-4 12 0-3 4-9 4-12 0z" fill="#eee" stroke="#333" />
          <circle cx="7" cy="7" r="2.500" fill="#333" />
          <path d="M3 3l1 2M7 1v3M11 3l-1 2" stroke="#333" />
        </svg>
        <svg width="12" height="14" viewBox="0 0 12 14" className="ml-[4px]">
          <path d="M2 7h8v6H2z" fill="#f3dc7e" stroke="#8a7a30" />
          <path d="M4 7V4a2.500 2.500 0 0 1 5 0" fill="none" stroke="#555" strokeWidth="1.200" />
        </svg>
        <div className="ml-[3px] w-[90px] h-[27px] shrink-0 rounded-[3px] border border-[#b3afa8] bg-[#f7f6f5] flex items-center">
          <span className="pl-[6px] w-[68px] font-bold text-[13px] whitespace-nowrap">•Vrstva 1</span>
          <div className="w-px h-[20px] bg-[#b3afa8]"></div>
          <Tri dir="d" className="ml-[4px] w-[13px] h-[13px] text-[#111]" />
        </div>
        <div className="ml-[6px] w-[803px] shrink-0 whitespace-nowrap text-[14px] tracking-[0.02px]">
          <b>25</b> objektů typu <b>Křivka</b> ve vrstvě <b>Vrstva 1</b>. Kliknutím na výběr přepnete ovládací prvky ze změny měřítka na rotaci a naop.
        </div>
        <div className="ml-[3px] w-px h-[28px] bg-[#b5b3ae]"></div>
        <div className="ml-[2px] w-[61px] text-[13px] leading-[14px]">
          <div className="flex justify-between"><span>X:</span><span>-33,56</span></div>
          <div className="flex justify-between"><span>Y:</span><span>287,49</span></div>
        </div>
        <span className="ml-[8px] w-[13px] text-[12px]">Z:</span>
        <Spin value="50%" box="w-[44px] justify-center" />
        <svg width="14" height="14" viewBox="0 0 14 14" className="ml-[3px] self-end">
          <path d="M2 14L14 2M6 14l8-8M10 14l4-4" stroke="#aaa" />
        </svg>
      </div>
    </div>
  );
}
